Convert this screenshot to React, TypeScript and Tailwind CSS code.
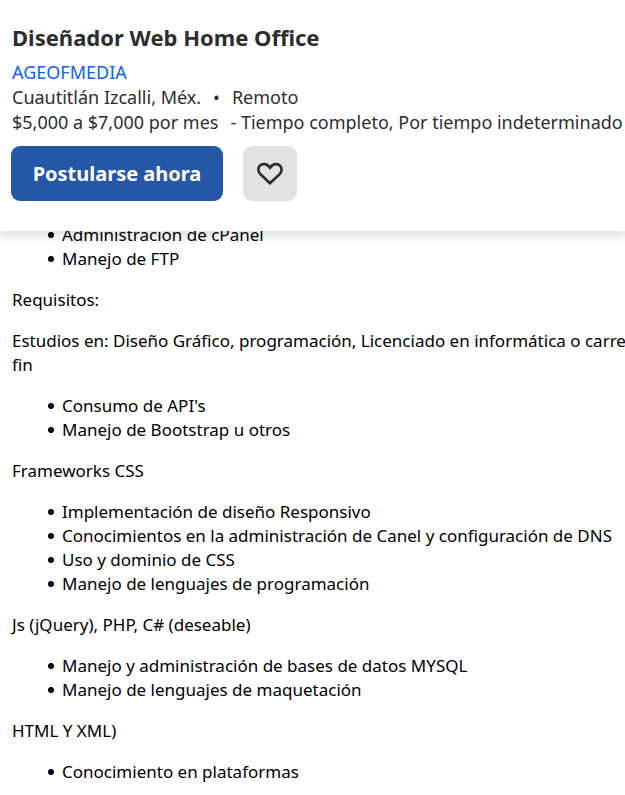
import type { ReactNode } from "react";

const List = ({ items }: { items: string[] }) => (
  <ul className="pl-9">
    {items.map((item) => (
      <li
        key={item}
        className="flex items-center gap-2 whitespace-nowrap before:size-[6px] before:shrink-0 before:rounded-full before:bg-black before:content-['']"
      >
        {item}
      </li>
    ))}
  </ul>
);

const Text = ({ children }: { children: ReactNode }) => <p className="whitespace-nowrap">{children}</p>;

export default function App() {
  return (
    <main className="h-screen overflow-hidden bg-white font-['Noto_Sans',sans-serif] text-[17px] text-black">
      <header className="relative bg-white px-3 pt-[21px] pb-[30px] text-[18px] leading-[25px] text-[#2d2d2d] shadow-[0_3px_8px_3px_rgba(0,0,0,0.11)]">
        <h1 className="text-[22px] leading-8 font-bold">Diseñador Web Home Office</h1>
        <a href="#empresa" className="mt-[7px] block text-[#0d5fff]">AGEOFMEDIA</a>
        <p className="flex gap-3">
          <span>Cuautitlán Izcalli, Méx.</span>
          <span>•</span>
          <span>Remoto</span>
        </p>
        <p className="-mr-3 flex gap-3 overflow-hidden whitespace-nowrap">
          <span>$5,000 a $7,000 por mes</span>
          <span>- Tiempo completo, Por tiempo indeterminado</span>
        </p>
        <div className="-ml-px mt-[11px] flex gap-5">
          <button className="h-[55px] w-[212px] rounded-[9px] bg-[#2557a7] text-[20px] font-bold text-white">
            Postularse ahora
          </button>
          <button
            aria-label="Guardar empleo"
            className="flex h-[55px] w-[54px] items-center justify-center rounded-[9px] bg-[#e4e2e0]"
          >
            <svg width="28" height="28" viewBox="0 0 28 28" fill="none" stroke="#2d2d2d" strokeWidth="2.7">
              <path d="M14 23.2 4.7 14.6C1.8 11.7 1.7 7.8 4 5.6 6.8 2.9 11.3 3.8 14 7.6 16.7 3.8 21.2 2.9 24 5.6 26.3 7.8 26.2 11.7 23.3 14.6Z" />
            </svg>
          </button>
        </div>
      </header>
      <article className="-mt-2 flex flex-col gap-[17px] px-3 leading-6">
        <List items={["Administración de cPanel", "Manejo de FTP"]} />
        <Text>Requisitos:</Text>
        <Text>
          Estudios en: Diseño Gráfico, programación, Licenciado en informática o carrera
          <br />
          fin
        </Text>
        <List items={["Consumo de API's", "Manejo de Bootstrap u otros"]} />
        <Text>Frameworks CSS</Text>
        <List
          items={[
            "Implementación de diseño Responsivo",
            "Conocimientos en la administración de Canel y configuración de DNS",
            "Uso y dominio de CSS",
            "Manejo de lenguajes de programación",
          ]}
        />
        <Text>Js (jQuery), PHP, C# (deseable)</Text>
        <List items={["Manejo y administración de bases de datos MYSQL", "Manejo de lenguajes de maquetación"]} />
        <Text>HTML Y XML)</Text>
        <List items={["Conocimiento en plataformas"]} />
      </article>
    </main>
  );
}
